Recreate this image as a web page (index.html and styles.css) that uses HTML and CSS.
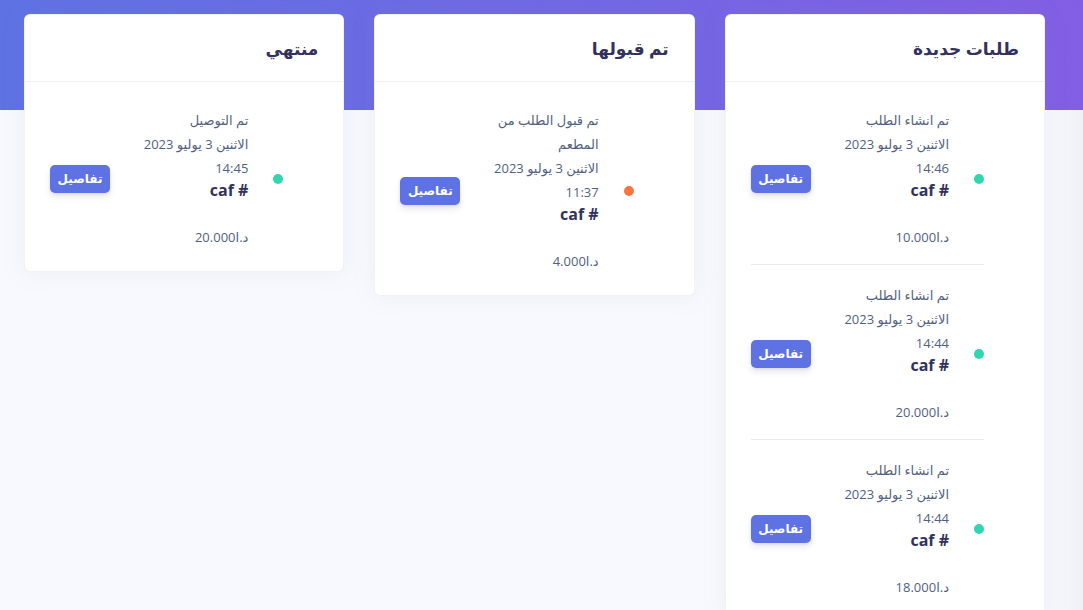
FILE: index.html
```html
<!DOCTYPE html>
<html lang="ar" dir="rtl">
<head>
<meta charset="utf-8">
<title>الطلبات</title>
<link rel="stylesheet" href="styles.css">
</head>
<body>
<main class="page">
  <div class="board">
    <section class="card">
      <header class="card-header"><h3 class="card-title">طلبات جديدة</h3></header>
      <div class="card-body">
        <div class="order">
          <span class="dot dot-green"></span>
          <div class="order-info">
            <div class="line">تم انشاء الطلب</div>
            <div class="line nowrap">الاثنين 3 يوليو 2023</div>
            <div class="line">14:46</div>
            <div class="ref"># caf</div>
            <div class="price">د.ا10.000</div>
          </div>
          <button class="btn">تفاصيل</button>
        </div>
        <div class="order">
          <span class="dot dot-green"></span>
          <div class="order-info">
            <div class="line">تم انشاء الطلب</div>
            <div class="line nowrap">الاثنين 3 يوليو 2023</div>
            <div class="line">14:44</div>
            <div class="ref"># caf</div>
            <div class="price">د.ا20.000</div>
          </div>
          <button class="btn">تفاصيل</button>
        </div>
        <div class="order">
          <span class="dot dot-green"></span>
          <div class="order-info">
            <div class="line">تم انشاء الطلب</div>
            <div class="line nowrap">الاثنين 3 يوليو 2023</div>
            <div class="line">14:44</div>
            <div class="ref"># caf</div>
            <div class="price">د.ا18.000</div>
          </div>
          <button class="btn">تفاصيل</button>
        </div>
      </div>
    </section>

    <section class="card">
      <header class="card-header"><h3 class="card-title">تم قبولها</h3></header>
      <div class="card-body">
        <div class="order">
          <span class="dot dot-orange"></span>
          <div class="order-info">
            <div class="line">تم قبول الطلب من المطعم</div>
            <div class="line nowrap">الاثنين 3 يوليو 2023</div>
            <div class="line">11:37</div>
            <div class="ref"># caf</div>
            <div class="price">د.ا4.000</div>
          </div>
          <button class="btn">تفاصيل</button>
        </div>
      </div>
    </section>

    <section class="card">
      <header class="card-header"><h3 class="card-title">منتهي</h3></header>
      <div class="card-body">
        <div class="order">
          <span class="dot dot-green"></span>
          <div class="order-info">
            <div class="line">تم التوصيل</div>
            <div class="line nowrap">الاثنين 3 يوليو 2023</div>
            <div class="line">14:45</div>
            <div class="ref"># caf</div>
            <div class="price">د.ا20.000</div>
          </div>
          <button class="btn">تفاصيل</button>
        </div>
      </div>
    </section>
  </div>
</main>
</body>
</html>
```

FILE: styles.css
```css
html, body {
  margin: 0;
  padding: 0;
  height: 100%;
  overflow: hidden;
}

body {
  font-family: "Open Sans", "DejaVu Sans", sans-serif;
  color: #525f7f;
  background: #f8f9fe;
}

.page {
  min-height: 100%;
  background:
    linear-gradient(87deg, #5e72e4 0%, #825ee4 100%) 0 0 / 100% 110px no-repeat,
    linear-gradient(to left, #f0f1f7 0, #f8f9fe 38px) 0 0 / 100% 100% no-repeat,
    #f8f9fe;
}

.board {
  display: flex;
  align-items: flex-start;
  gap: 30px;
  padding: 14px 38px 0 24px;
}

.card {
  flex: 1 1 0;
  min-width: 0;
  background: #fff;
  border: 1px solid rgba(0, 0, 0, 0.05);
  border-radius: 6px;
  box-shadow: 0 0 1.5rem 0 rgba(136, 152, 170, 0.1);
}

.card-header {
  height: 66px;
  display: flex;
  align-items: center;
  padding: 0 25px;
  border-bottom: 1px solid #eff0f3;
}

.card-title {
  margin: 0;
  font-size: 17px;
  font-weight: 700;
  color: #32325d;
}

.card-body {
  padding: 8px 60px 7px 25px;
}

.order {
  display: flex;
  align-items: center;
  padding: 18px 0 15px;
  border-bottom: 1px solid #e9ecef;
}

.order:last-child {
  border-bottom: none;
}

.dot {
  flex: none;
  width: 10px;
  height: 10px;
  border-radius: 50%;
  margin-left: 25px;
}

.dot-green { background: #2fd6b0; }
.dot-orange { background: #fd7340; }

.order-info {
  width: 118px;
  text-align: right;
}

.line {
  font-size: 13px;
  line-height: 24px;
  color: #525f7f;
}

.nowrap { white-space: nowrap; }

.ref {
  font-size: 16px;
  font-weight: 700;
  line-height: 20px;
  color: #32325d;
}

.price {
  margin-top: 25px;
  font-size: 13px;
  line-height: 24px;
  color: #525f7f;
}

.btn {
  margin-inline-start: auto;
  flex: none;
  width: 60px;
  height: 28px;
  padding: 0;
  border: none;
  border-radius: 5px;
  background: #5e72e4;
  color: #fff;
  font-family: "Open Sans", "DejaVu Sans", sans-serif;
  font-size: 12px;
  font-weight: 700;
  box-shadow: 0 4px 6px rgba(50, 50, 93, 0.11), 0 1px 3px rgba(0, 0, 0, 0.08);
  cursor: pointer;
}
```
